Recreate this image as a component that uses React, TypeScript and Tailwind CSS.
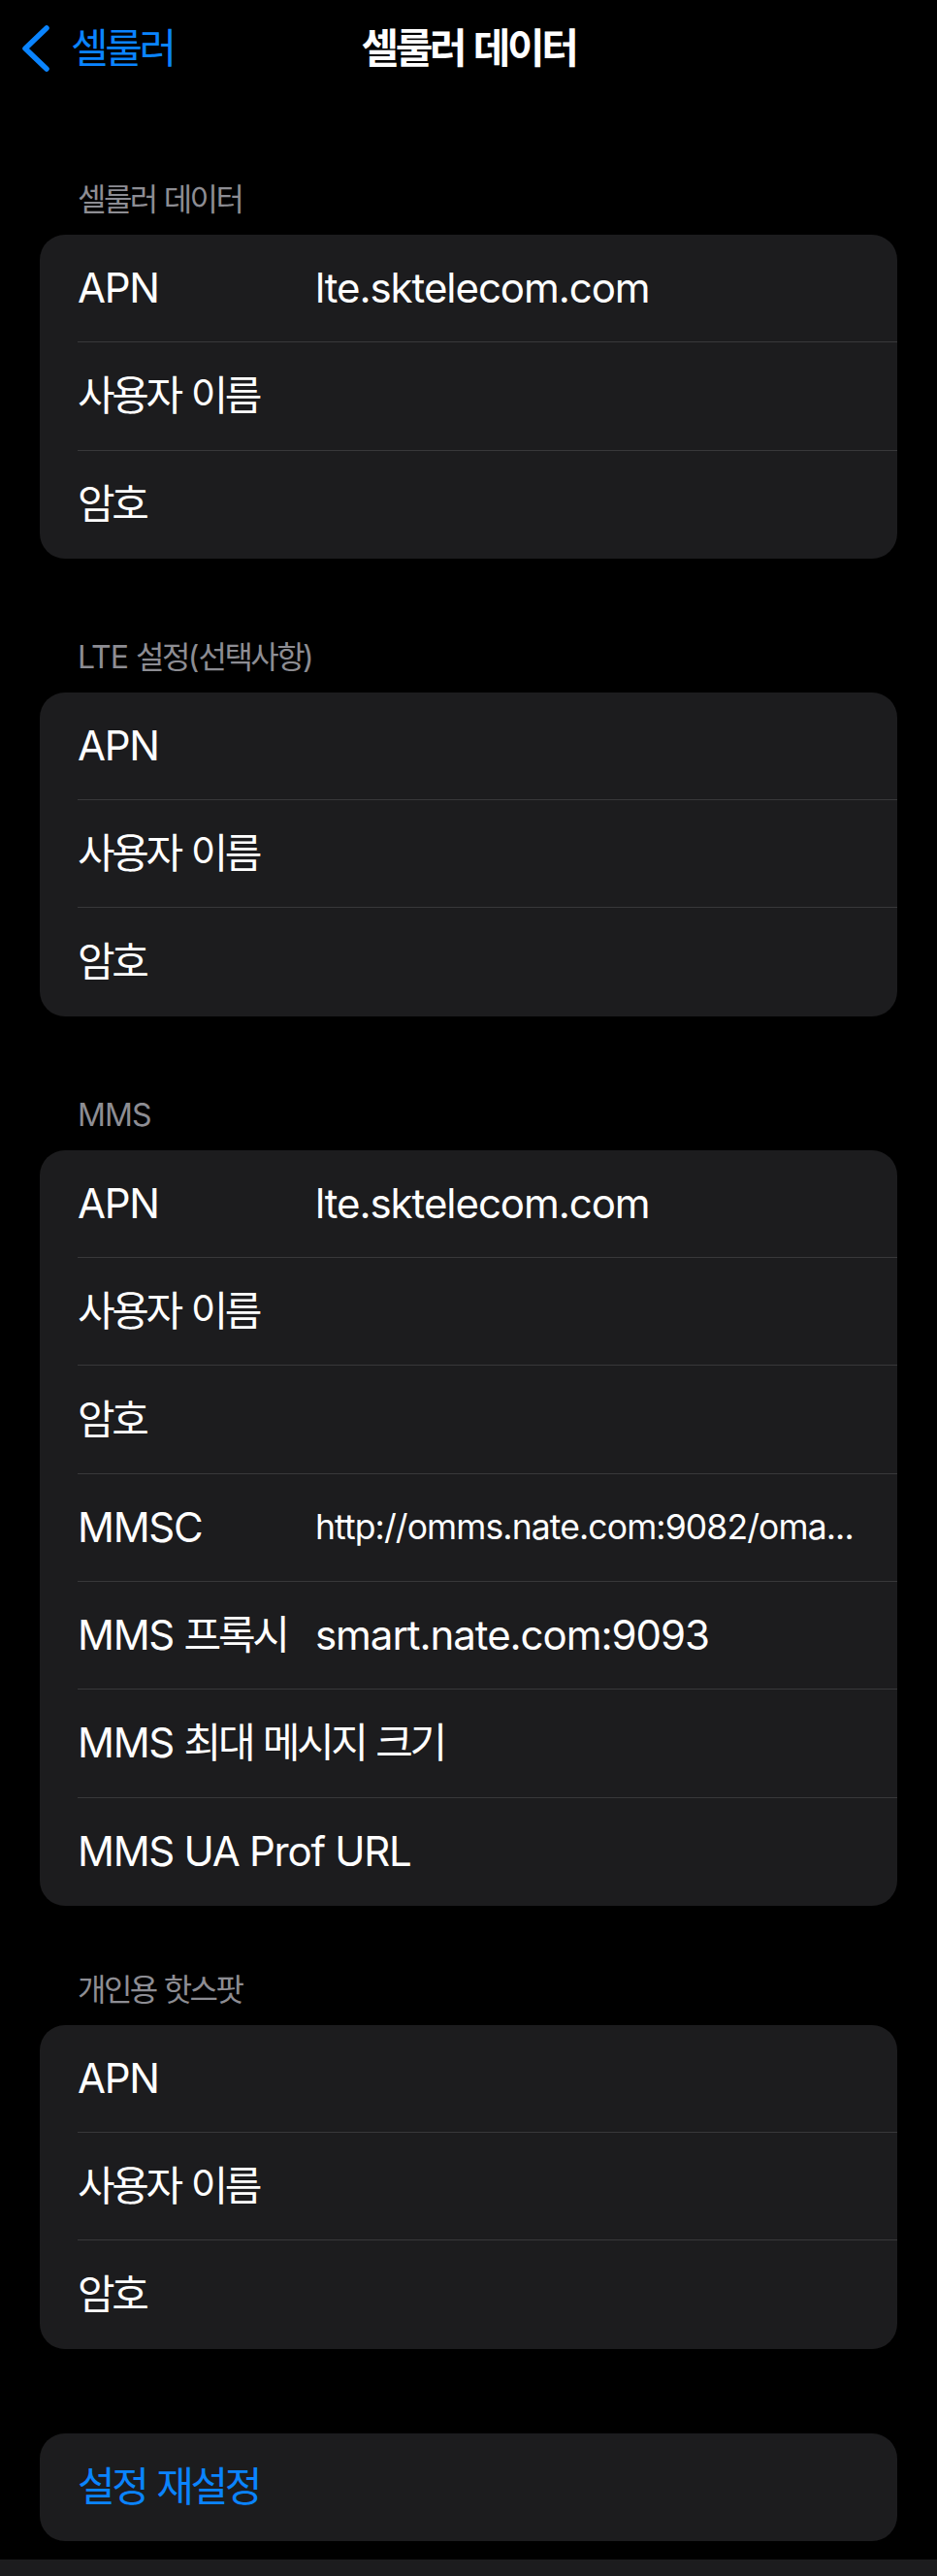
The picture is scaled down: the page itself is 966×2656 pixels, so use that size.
import React from "react";

const FONT = '"Inter", "Noto Sans CJK KR", sans-serif';

function K({ text }: { text: string }) {
  const parts = text.split(/([\uAC00-\uD7A3]+)/);
  return (
    <>
      {parts.map((p, i) =>
        /[\uAC00-\uD7A3]/.test(p) ? (
          <span key={i} className="tracking-[-0.08em]">
            {p}
          </span>
        ) : (
          <span key={i} className="tracking-[-0.03em]">
            {p}
          </span>
        )
      )}
    </>
  );
}

type Row = { label: string; value?: string; small?: boolean };

function Card({ rows }: { rows: Row[] }) {
  return (
    <div className="mx-[41px] rounded-[26px] bg-[#1c1c1e] overflow-hidden">
      {rows.map((r, i) => (
        <div key={i} className="flex h-[111.3px] pl-[39px]">
          <div
            className={
              "flex flex-1 items-center " +
              (i < rows.length - 1 ? "border-b border-[#38383a]" : "")
            }
          >
            <div className="w-[245px] shrink-0 text-[42px] leading-[50px] text-white whitespace-nowrap">
              <K text={r.label} />
            </div>
            {r.value && (
              <div
                className={
                  "whitespace-nowrap text-white " +
                  (r.small
                    ? "text-[35.5px] leading-[50px] tracking-[-0.025em]"
                    : "text-[42px] leading-[50px] tracking-[-0.025em]")
                }
              >
                {r.value}
              </div>
            )}
          </div>
        </div>
      ))}
    </div>
  );
}

function Header({ text, mt }: { text: string; mt: string }) {
  return (
    <div
      className={
        "px-[80px] pb-[16px] text-[32px] leading-[40px] text-[#8d8d93] " + mt
      }
    >
      <K text={text} />
    </div>
  );
}

export default function App() {
  const basic: Row[] = [{ label: "APN" }, { label: "사용자 이름" }, { label: "암호" }];
  return (
    <div
      className="w-[966px] min-h-[2656px] bg-black flex flex-col"
      style={{ fontFamily: FONT }}
    >
      {/* nav bar */}
      <div className="grid grid-cols-[1fr_auto_1fr] items-center h-[100px]">
        <div className="flex items-center pl-[22px] text-[#0a84ff]">
          <svg width="32" height="50" viewBox="0 0 32 50" className="shrink-0">
            <path
              d="M26 4 L4 25 L26 46"
              fill="none"
              stroke="#0a84ff"
              strokeWidth="5.5"
              strokeLinecap="round"
              strokeLinejoin="round"
            />
          </svg>
          <span className="ml-[19px] text-[42px] leading-[50px]">
            <K text="셀룰러" />
          </span>
        </div>
        <div className="text-[42px] leading-[50px] font-semibold text-white tracking-[-0.01em]">
          <K text="셀룰러 데이터" />
        </div>
        <div />
      </div>

      <Header text="셀룰러 데이터" mt="mt-[86px]" />
      <Card
        rows={[
          { label: "APN", value: "lte.sktelecom.com" },
          { label: "사용자 이름" },
          { label: "암호" },
        ]}
      />

      <Header text="LTE 설정(선택사항)" mt="mt-[82px]" />
      <Card rows={basic} />

      <Header text="MMS" mt="mt-[82px]" />
      <Card
        rows={[
          { label: "APN", value: "lte.sktelecom.com" },
          { label: "사용자 이름" },
          { label: "암호" },
          { label: "MMSC", value: "http://omms.nate.com:9082/oma...", small: true },
          { label: "MMS 프록시", value: "smart.nate.com:9093" },
          { label: "MMS 최대 메시지 크기" },
          { label: "MMS UA Prof URL" },
        ]}
      />

      <Header text="개인용 핫스팟" mt="mt-[67px]" />
      <Card rows={basic} />

      <div className="mt-[87px] mx-[41px] rounded-[26px] bg-[#1c1c1e] h-[111px] flex items-center pl-[39px]">
        <span className="text-[42px] leading-[50px] text-[#0a84ff]">
          <K text="설정 재설정" />
        </span>
      </div>

      <div className="mt-[19px] h-[19px] bg-[#1c1c1e]" />
    </div>
  );
}
